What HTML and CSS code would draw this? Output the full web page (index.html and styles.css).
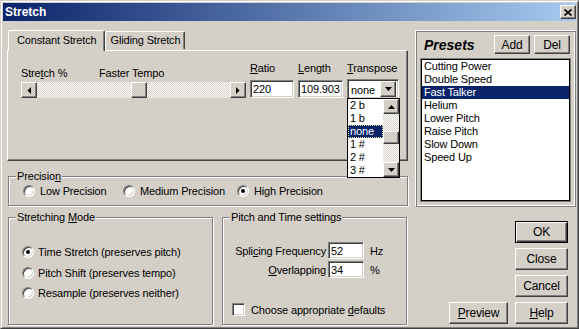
FILE: index.html
```html
<!DOCTYPE html>
<html lang="en">
<head>
    <meta charset="UTF-8">
    <title>Stretch</title>
    <link rel="stylesheet" href="styles.css">
</head>
<body>

<div class="window">
    <!-- Title bar -->
    <div class="titlebar">
        <span class="title">Stretch</span>
        <div class="btn close-btn">
            <svg width="8" height="7" viewBox="0 0 8 7"><path d="M0.5 0.5L7.5 6.5M7.5 0.5L0.5 6.5" stroke="#000" stroke-width="1.6"/></svg>
        </div>
    </div>

    <div class="client">
        <div class="top-row">
            <div class="left-col">
                <!-- Tabs -->
                <div class="tabs">
                    <div class="tab active">Constant Stretch</div>
                    <div class="tab">Gliding Stretch</div>
                </div>

                <div class="tab-panel">
                    <div class="stretch-grid">
                        <div class="lbl-pair">
                            <span class="lbl-stretch">Stre<u>t</u>ch %</span>
                            <span>Faster Tempo</span>
                        </div>
                        <div class="lbl"><u>R</u>atio</div>
                        <div class="lbl"><u>L</u>ength</div>
                        <div class="lbl"><u>T</u>ranspose</div>

                        <div class="hscroll">
                            <div class="btn sb-btn">
                                <svg width="4" height="7" viewBox="0 0 4 7"><polygon points="4,0 4,7 0.5,3.5" fill="#000"/></svg>
                            </div>
                            <div class="track track-left"></div>
                            <div class="btn sb-thumb-h"></div>
                            <div class="track track-fill"></div>
                            <div class="btn sb-btn">
                                <svg width="4" height="7" viewBox="0 0 4 7"><polygon points="0,0 0,7 3.5,3.5" fill="#000"/></svg>
                            </div>
                        </div>
                        <div class="edit">220</div>
                        <div class="edit">109.903</div>
                        <div class="combo">
                            <span class="combo-text">none</span>
                            <div class="btn combo-btn">
                                <svg width="7" height="4" viewBox="0 0 7 4"><polygon points="0,0 7,0 3.5,4" fill="#000"/></svg>
                            </div>

                            <!-- Open drop-down list -->
                            <div class="dropdown">
                                <div class="dd-items">
                                    <div class="dd-item">2 b</div>
                                    <div class="dd-item">1 b</div>
                                    <div class="dd-item selected">none</div>
                                    <div class="dd-item">1 #</div>
                                    <div class="dd-item">2 #</div>
                                    <div class="dd-item">3 #</div>
                                </div>
                                <div class="vscroll">
                                    <div class="btn vs-btn">
                                        <svg width="7" height="4" viewBox="0 0 7 4"><polygon points="0,4 7,4 3.5,0" fill="#000"/></svg>
                                    </div>
                                    <div class="track vtrack-top"></div>
                                    <div class="btn vs-thumb"></div>
                                    <div class="track track-fill"></div>
                                    <div class="btn vs-btn">
                                        <svg width="7" height="4" viewBox="0 0 7 4"><polygon points="0,0 7,0 3.5,4" fill="#000"/></svg>
                                    </div>
                                </div>
                            </div>
                        </div>
                    </div>
                </div>

                <!-- Precision -->
                <div class="group precision">
                    <span class="group-label">Precisio<u>n</u></span>
                    <div class="radio-row">
                        <label class="radio-item w-low"><span class="radio"></span><span>Low Precision</span></label>
                        <label class="radio-item w-med"><span class="radio"></span><span>Medium Precision</span></label>
                        <label class="radio-item"><span class="radio checked"></span><span>High Precision</span></label>
                    </div>
                </div>
            </div>

            <!-- Presets -->
            <div class="presets">
                <div class="presets-head">
                    <span class="presets-title">Presets</span>
                    <div class="btn small-btn">Add</div>
                    <div class="btn small-btn">Del</div>
                </div>
                <div class="listbox">
                    <div class="list-item">Cutting Power</div>
                    <div class="list-item">Double Speed</div>
                    <div class="list-item selected">Fast Talker</div>
                    <div class="list-item">Helium</div>
                    <div class="list-item">Lower Pitch</div>
                    <div class="list-item">Raise Pitch</div>
                    <div class="list-item">Slow Down</div>
                    <div class="list-item">Speed Up</div>
                </div>
            </div>
        </div>

        <div class="bottom-row">
            <!-- Stretching Mode -->
            <div class="group mode">
                <span class="group-label">Stretching <u>M</u>ode</span>
                <div class="radio-col">
                    <label class="radio-item"><span class="radio checked"></span><span>Time Stretch (preserves pitch)</span></label>
                    <label class="radio-item"><span class="radio"></span><span>Pitch Shift (preserves tempo)</span></label>
                    <label class="radio-item"><span class="radio"></span><span>Resample (preserves neither)</span></label>
                </div>
            </div>

            <!-- Pitch and Time settings -->
            <div class="group pitch">
                <span class="group-label">Pitch and Time settings</span>
                <div class="pitch-grid">
                    <span class="pitch-lbl">Spli<u>c</u>ing Frequency</span>
                    <div class="edit small-edit">52</div>
                    <span>Hz</span>
                    <span class="pitch-lbl"><u>O</u>verlapping</span>
                    <div class="edit small-edit">34</div>
                    <span class="unit-pct">%</span>
                </div>
                <label class="check-item"><span class="checkbox"></span><span>Choose appropriate <u>d</u>efaults</span></label>
            </div>

            <!-- Dialog buttons -->
            <div class="dlg-buttons">
                <div class="btn dlg-btn default col-2">OK</div>
                <div class="btn dlg-btn col-2">Close</div>
                <div class="btn dlg-btn col-2">Cancel</div>
                <div class="btn dlg-btn"><span><u>P</u>review</span></div>
                <div class="btn dlg-btn"><span><u>H</u>elp</span></div>
            </div>
        </div>
    </div>
</div>

</body>
</html>
```

FILE: styles.css
```css
/* Base: classic Windows dialog */
body {
    margin: 0;
    background-color: #d4d0c8;
    font-family: "Liberation Sans", Arial, sans-serif;
    font-size: 11px;
    letter-spacing: -0.15px;
    color: #000;
}

u { text-decoration: underline; text-underline-offset: 1px; }

.window {
    width: 579px;
    height: 329px;
    box-sizing: border-box;
    border: 1px solid;
    border-color: #d4d0c8 #404040 #404040 #d4d0c8;
    box-shadow: inset 1px 1px #fff, inset -1px -1px #808080;
    padding: 2px;
    background-color: #d4d0c8;
}

/* Title bar */
.titlebar {
    height: 18px;
    display: flex;
    align-items: center;
    justify-content: space-between;
    padding-left: 2px;
    background: linear-gradient(to right, #0a246a, #a6caf0);
}
.title {
    color: #fff;
    font-weight: 700;
    font-size: 12px;
    letter-spacing: 0;
}

/* Raised 3D button look */
.btn {
    box-sizing: border-box;
    background-color: #d4d0c8;
    border: 1px solid;
    border-color: #fff #404040 #404040 #fff;
    box-shadow: inset -1px -1px #808080;
    display: flex;
    align-items: center;
    justify-content: center;
}

.close-btn {
    width: 16px;
    height: 14px;
}

/* Client area */
.client {
    padding: 9px 0 0 4px;
}

.top-row {
    display: flex;
    gap: 7px;
}

.left-col {
    width: 401px;
}

/* Tabs */
.tabs {
    display: flex;
    height: 20px;
    padding-left: 1px;
    align-items: flex-end;
}
.tab {
    box-sizing: border-box;
    height: 18px;
    padding: 2px 4px 0 5px;
    border: 1px solid;
    border-color: #fff #404040 transparent #fff;
    border-bottom: none;
    border-radius: 2px 2px 0 0;
    box-shadow: inset -1px 0 #808080;
    margin-bottom: 1px;
}
.tab.active {
    height: 21px;
    padding: 3px 7px 0 8px;
    margin-bottom: -1px;
    position: relative;
    z-index: 1;
    background-color: #d4d0c8;
}

.tab-panel {
    box-sizing: border-box;
    height: 111px;
    border: 1px solid;
    border-color: #fff #404040 #404040 #fff;
    box-shadow: inset -1px -1px #808080;
    padding: 10px 0 0 13px;
}

.stretch-grid {
    display: grid;
    grid-template-columns: 225px 44px 45px 52px;
    grid-template-rows: 18px 20px;
    column-gap: 4px;
    row-gap: 0;
}
.lbl-pair {
    display: flex;
    align-self: end;
    margin-bottom: 0;
}
.lbl-stretch {
    width: 78px;
}
.lbl {
    align-self: start;
    margin-top: 1px;
}

/* Horizontal scrollbar */
.hscroll {
    display: flex;
    height: 16px;
    margin-top: 3px;
}
.sb-btn {
    width: 16px;
    height: 16px;
}
.track {
    background: repeating-conic-gradient(#d4d0c8 0 25%, #fff 0 50%) 0 0 / 2px 2px;
}
.track-left { width: 94px; }
.track-fill { flex: 1; }
.sb-thumb-h {
    width: 16px;
    height: 16px;
}

/* Edit fields */
.edit {
    box-sizing: border-box;
    height: 18px;
    background-color: #fff;
    border: 1px solid;
    border-color: #808080 #fff #fff #808080;
    box-shadow: inset 1px 1px #404040, inset -1px -1px #d4d0c8;
    padding: 0 2px;
    line-height: 16px;
    margin-top: 1px;
}

/* Combo box */
.combo {
    position: relative;
    box-sizing: border-box;
    height: 20px;
    display: flex;
    align-items: center;
    justify-content: space-between;
    background-color: #fff;
    border: 1px solid;
    border-color: #808080 #fff #fff #808080;
    box-shadow: inset 1px 1px #404040, inset -1px -1px #d4d0c8;
    padding: 0 2px 0 3px;
}
.combo-text { padding-top: 2px; }
.combo-btn {
    width: 16px;
    height: 16px;
}

.dropdown {
    position: absolute;
    top: 100%;
    left: -1px;
    width: 53px;
    box-sizing: border-box;
    display: flex;
    background-color: #fff;
    border: 1px solid #000;
    z-index: 5;
}
.dd-items {
    flex: 1;
}
.dd-item {
    height: 13px;
    line-height: 13px;
    padding-left: 2px;
}
.dd-item.selected {
    background-color: #0a246a;
    color: #fff;
    outline: 1px dotted #e6e08a;
    outline-offset: -1px;
}
.vscroll {
    width: 16px;
    height: 78px;
    display: flex;
    flex-direction: column;
}
.vs-btn { height: 15px; }
.vtrack-top { height: 17px; }
.vs-thumb { height: 13px; }

/* Group boxes */
.group {
    position: relative;
    box-sizing: border-box;
    border: 1px solid #808080;
    box-shadow: inset 1px 1px #fff, 1px 1px #fff;
}
.group-label {
    position: absolute;
    top: -8px;
    left: 7px;
    padding: 0 1px;
    background-color: #d4d0c8;
    line-height: 14px;
}

.precision {
    margin: 15px 0 0 1px;
    height: 30px;
    width: 400px;
}
.radio-row {
    display: flex;
    align-items: center;
    height: 100%;
    padding-left: 14px;
}
.radio-item {
    display: flex;
    align-items: center;
    gap: 5px;
}
.w-low { width: 100px; }
.w-med { width: 114px; }
.radio {
    box-sizing: border-box;
    width: 12px;
    height: 12px;
    border-radius: 50%;
    background-color: #fff;
    border: 1px solid;
    border-color: #808080 #fff #fff #808080;
    box-shadow: inset 1px 1px #404040, inset -1px -1px #d4d0c8;
    display: flex;
    align-items: center;
    justify-content: center;
}
.radio.checked::after {
    content: "";
    width: 4px;
    height: 4px;
    border-radius: 50%;
    background-color: #000;
}

/* Presets */
.presets {
    box-sizing: border-box;
    width: 161px;
    height: 177px;
    border: 1px solid;
    border-color: #fff #808080 #808080 #fff;
    box-shadow: inset 1px 1px #808080, inset -1px -1px #fff;
    padding: 4px 5px 0 5px;
}
.presets-head {
    display: flex;
    align-items: center;
    height: 19px;
    gap: 4px;
}
.presets-title {
    font-weight: 700;
    font-style: italic;
    font-size: 14px;
    letter-spacing: 0;
    margin-left: 3px;
    margin-right: auto;
}
.small-btn {
    width: 36px;
    height: 19px;
    font-size: 12px;
}
.listbox {
    box-sizing: border-box;
    margin-top: 5px;
    height: 142px;
    background-color: #fff;
    border: 1px solid #000;
    box-shadow: 0 0 0 1px #808080;
}
.list-item {
    height: 13px;
    line-height: 13px;
    padding-left: 2px;
}
.list-item.selected {
    background-color: #0a246a;
    color: #fff;
}

/* Bottom row */
.bottom-row {
    display: flex;
    margin-top: 10px;
    padding-left: 1px;
}
.mode {
    width: 205px;
    height: 108px;
}
.radio-col {
    display: flex;
    flex-direction: column;
    padding: 24px 0 0 13px;
}
.radio-col .radio-item {
    height: 20.5px;
    gap: 4px;
}

.pitch {
    width: 185px;
    height: 108px;
    margin-left: 9px;
}
.pitch-grid {
    display: grid;
    grid-template-columns: 96px 36px auto;
    column-gap: 2px;
    row-gap: 2px;
    align-items: center;
    padding: 24px 0 0 7px;
}
.pitch-grid > span:nth-child(3n) { padding-left: 4px; }
.pitch-lbl { text-align: right; }
.small-edit {
    height: 17px;
    margin-top: 0;
}
.check-item {
    display: flex;
    align-items: center;
    gap: 6px;
    margin: 25px 0 0 9px;
}
.checkbox {
    box-sizing: border-box;
    width: 13px;
    height: 13px;
    background-color: #fff;
    border: 1px solid;
    border-color: #808080 #fff #fff #808080;
    box-shadow: inset 1px 1px #404040, inset -1px -1px #d4d0c8;
}

/* Dialog buttons */
.dlg-buttons {
    display: grid;
    grid-template-columns: 59px 53px;
    grid-auto-rows: 22px;
    column-gap: 7px;
    row-gap: 5px;
    margin: 4px 0 0 42px;
}
.dlg-btn {
    font-size: 12px;
}
.col-2 { grid-column: 2; }
.dlg-btn.default {
    border: 1px solid #000;
    box-shadow: inset 1px 1px #fff, inset -1px -1px #404040, inset -2px -2px #808080;
}
```
